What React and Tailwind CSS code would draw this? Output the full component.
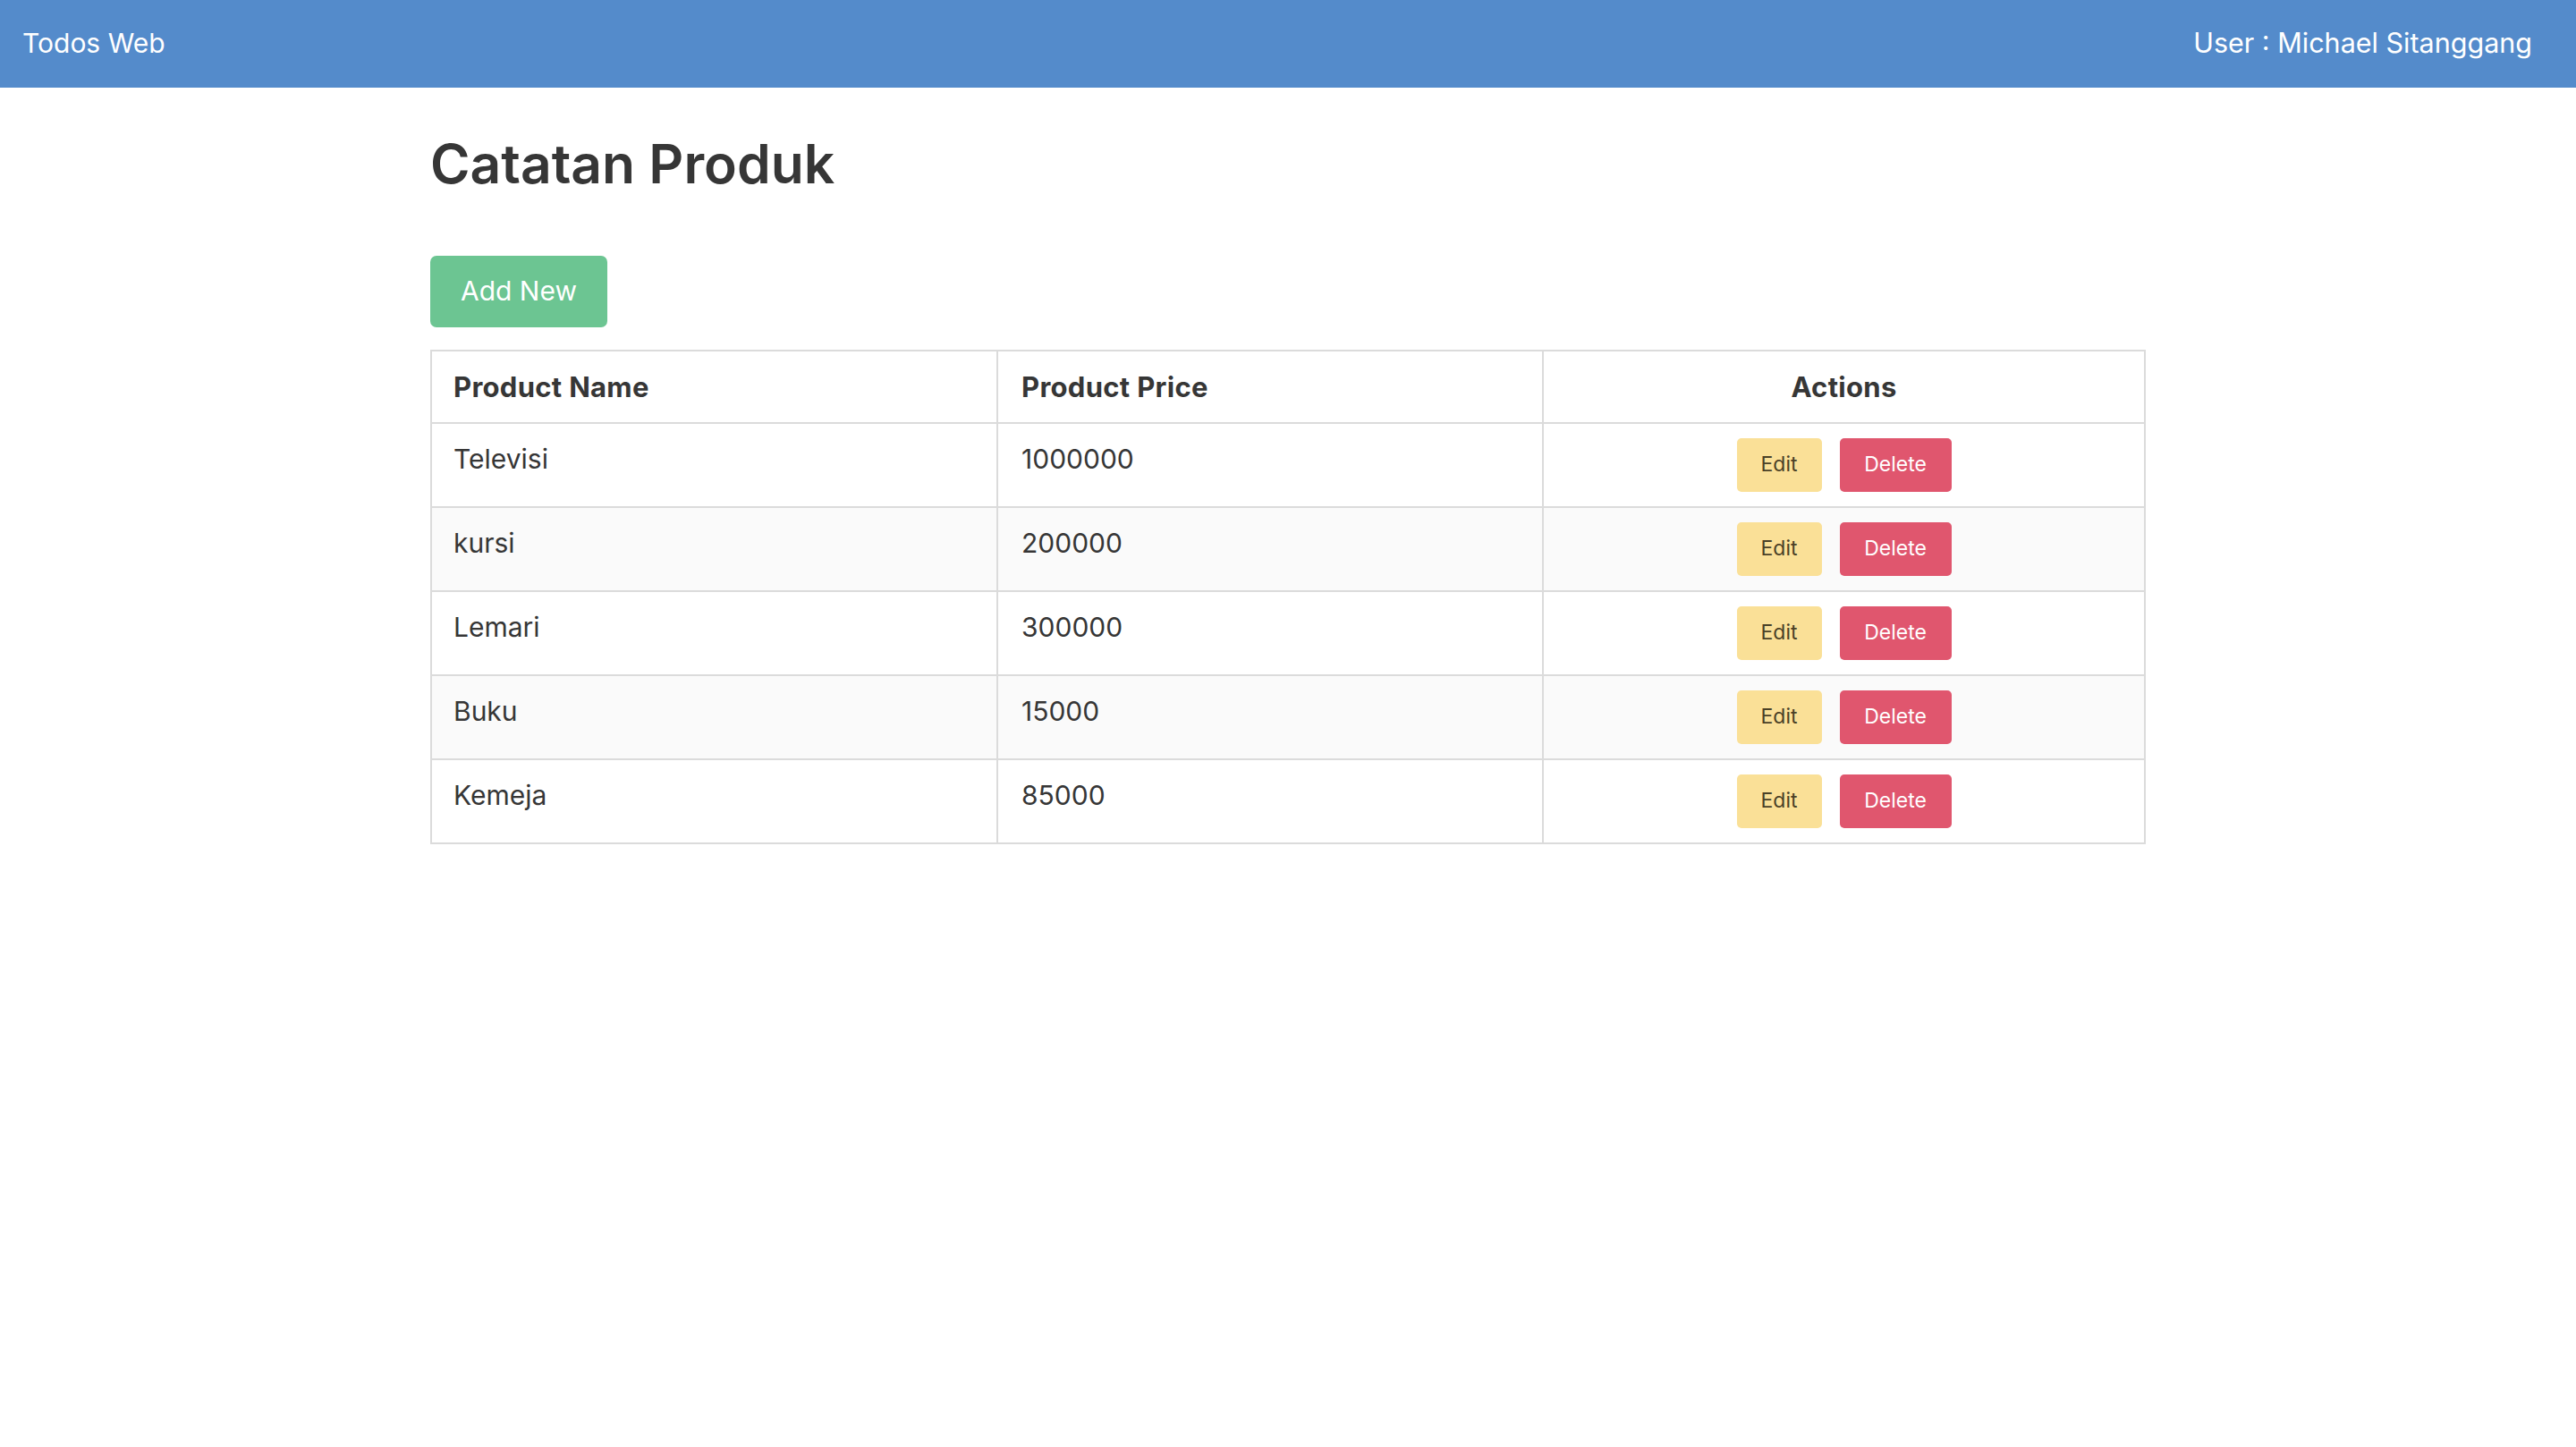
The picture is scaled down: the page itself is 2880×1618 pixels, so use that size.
import React from 'react';

const products = [
  { id: 1, name: 'Televisi', price: 1000000 },
  { id: 2, name: 'kursi', price: 200000 },
  { id: 3, name: 'Lemari', price: 300000 },
  { id: 4, name: 'Buku', price: 15000 },
  { id: 5, name: 'Kemeja', price: 85000 },
];

const Navbar = () => (
  <nav className="h-[98px] bg-[#548bcb] flex items-center justify-between pl-[25px] pr-[49px] pb-[2px] text-white text-[30px]">
    <span>Todos Web</span>
    <span className="text-[30.5px]">User : Michael Sitanggang</span>
  </nav>
);

const ProductTable = () => (
  <table className="w-full table-fixed border-collapse border-2 border-[#dbdbdb] text-[#363636] text-[30px]">
    <colgroup>
      <col className="w-[633px]" />
      <col className="w-[610px]" />
      <col />
    </colgroup>
    <thead>
      <tr className="h-[81px]">
        <th className="border-2 border-[#dbdbdb] px-[24px] text-left align-middle font-bold text-[31px] tracking-[0.3px] leading-[45px]">Product Name</th>
        <th className="border-2 border-[#dbdbdb] px-[26px] text-left align-middle font-bold text-[31px] tracking-[0.3px] leading-[45px]">Product Price</th>
        <th className="border-2 border-[#dbdbdb] px-[24px] text-center align-middle font-bold text-[31px] tracking-[0.3px] leading-[45px]">Actions</th>
      </tr>
    </thead>
    <tbody>
      {products.map((p, i) => (
        <tr key={p.id} className={i % 2 === 1 ? 'bg-[#fafafa]' : 'bg-white'}>
          <td className="border-2 border-[#dbdbdb] px-[24px] pt-[17px] align-top leading-[45px]">{p.name}</td>
          <td className="border-2 border-[#dbdbdb] px-[26px] pt-[17px] align-top leading-[45px]">{p.price}</td>
          <td className="border-2 border-[#dbdbdb] pt-[16px] pb-[16px] align-top">
            <div className="flex justify-center gap-[20px]">
              <button className="w-[95px] h-[60px] rounded-[5px] bg-[#fae097] text-[#4a4127] text-[23px]">Edit</button>
              <button className="w-[125px] h-[60px] rounded-[5px] bg-[#e0566e] text-white text-[23px]">Delete</button>
            </div>
          </td>
        </tr>
      ))}
    </tbody>
  </table>
);

export default function App() {
  return (
    <div className="min-h-screen bg-white font-['Inter',sans-serif]">
      <Navbar />
      <main className="w-[1918px] mx-auto pt-[55px]">
        <h1 className="text-[60.5px] leading-none font-semibold text-[#363636]">Catatan Produk</h1>
        <button className="mt-[72px] w-[198px] h-[80px] rounded-[7px] bg-[#6cc592] text-white text-[30px]">Add New</button>
        <div className="mt-[25px]">
          <ProductTable />
        </div>
      </main>
    </div>
  );
}
